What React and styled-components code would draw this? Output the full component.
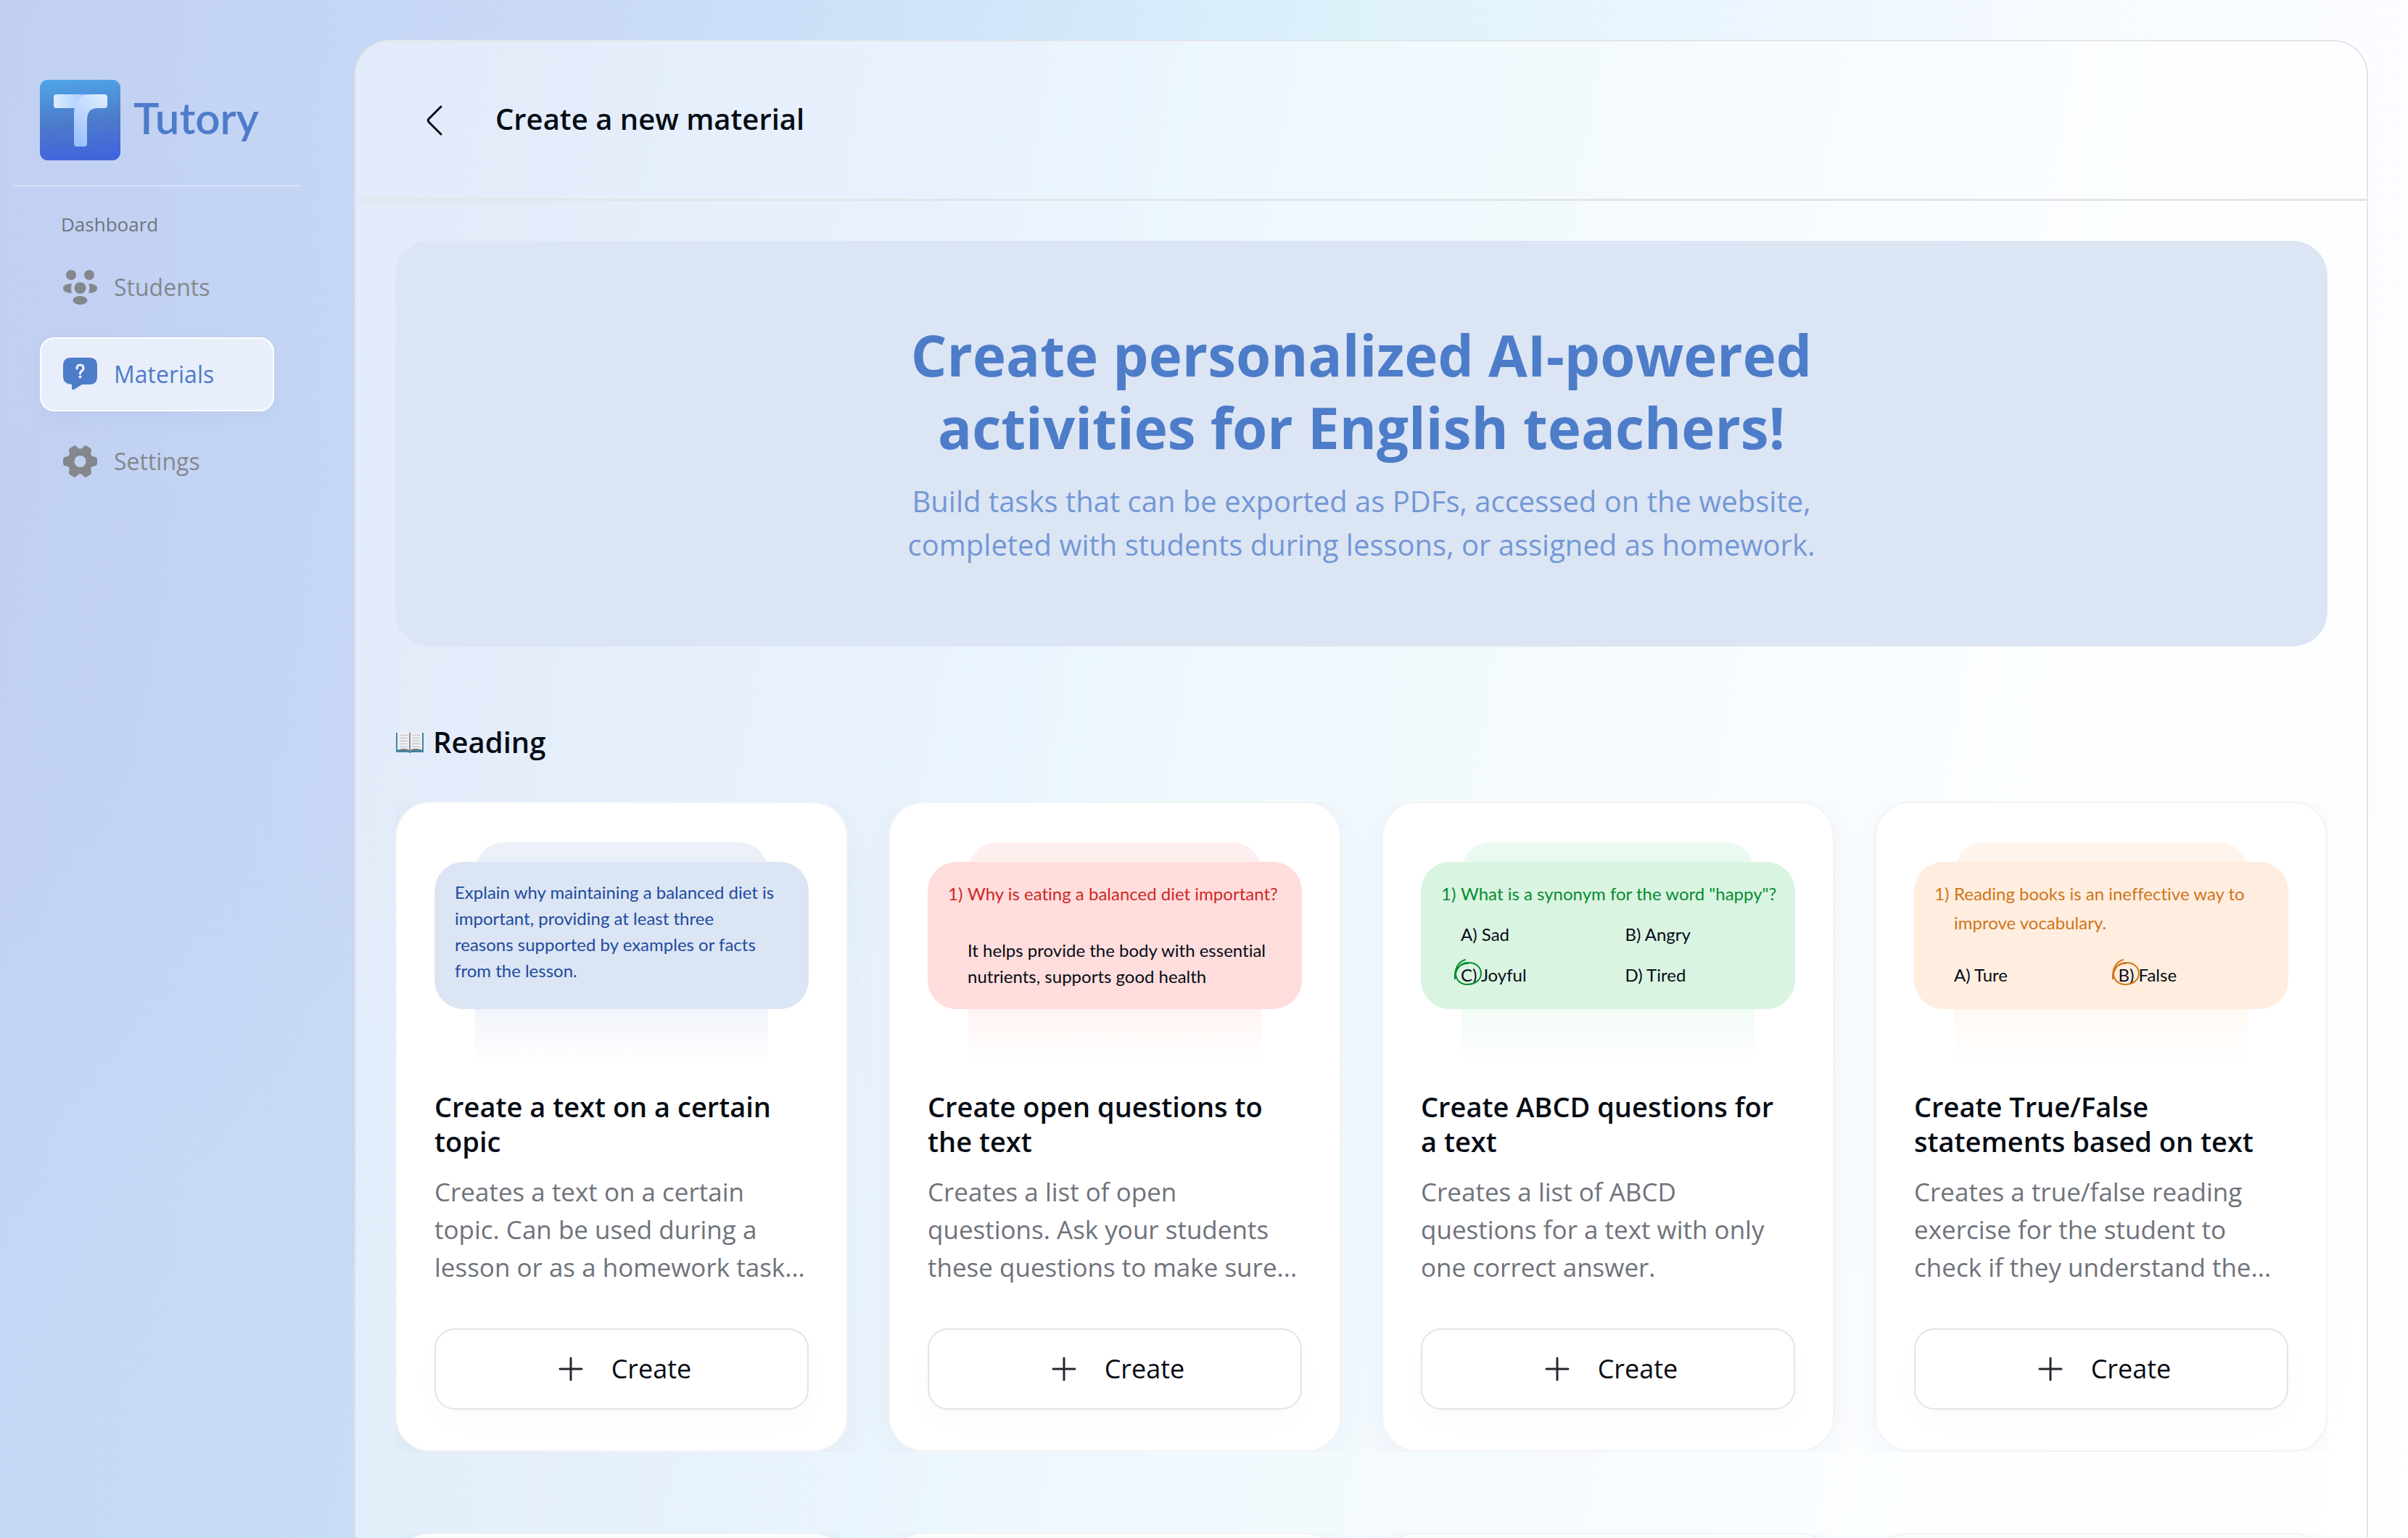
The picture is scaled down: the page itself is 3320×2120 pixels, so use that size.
import React from "react";
import styled, { createGlobalStyle } from "styled-components";

const UI = `"Open Sans", "Noto Sans", sans-serif`;
const BRAND = `"Lato", sans-serif`;
const HAND = `"Lato", sans-serif`;

const GlobalStyle = createGlobalStyle`
  *, *::before, *::after { box-sizing: border-box; }
  html, body, #root { height: 100%; }
  body { margin: 0; font-family: ${UI}; color: #060c14; overflow: hidden; font-variant-ligatures: none; }
  h1, h2, h3, p, ul { margin: 0; padding: 0; }
  button { font-family: inherit; color: inherit; cursor: pointer; }
`;

const Page = styled.div`
  display: flex;
  height: 100vh;
  overflow: hidden;
  background:
    radial-gradient(ellipse 1000px 1000px at 300px 100%, rgba(196, 224, 244, 0.4), rgba(196, 224, 244, 0)),
    radial-gradient(ellipse 600px 900px at 0 800px, rgba(192, 208, 242, 0.6), rgba(192, 208, 242, 0)),
    linear-gradient(100deg, #c2cff2 0%, #c5d6f5 12%, #c8d8f5 20%, #d1e4fa 36%, #def2fb 51%, #edf6fe 66%, #f8fcff 81%, #fdfdff 94%, #fff 100%);
`;

const Sidebar = styled.aside`
  flex: none;
  width: 489px;
  padding: 110px 74px 0 18px;
`;

const Brand = styled.a`
  display: flex;
  align-items: center;
  gap: 18px;
  padding: 0 0 34px 37px;
  border-bottom: 2px solid rgba(255, 255, 255, 0.3);
  color: #4d7cc9;
  font-family: ${BRAND};
  font-size: 60px;
  line-height: 72px;
  font-weight: 600;
  text-decoration: none;
`;

const BrandName = styled.span`
  padding-bottom: 8px;
`;

const NavLabel = styled.h2`
  margin: 32px 0 16px 66px;
  color: #6f757c;
  font-size: 26px;
  line-height: 40px;
  font-weight: 400;
`;

const NavList = styled.ul`
  display: flex;
  flex-direction: column;
  gap: 18px;
  padding: 0 37px;
  list-style: none;
`;

const NavLink = styled.a`
  display: flex;
  align-items: center;
  gap: 23px;
  height: 102px;
  padding: 0 30px;
  border: 2px solid ${(p) => (p.$active ? "#fff" : "transparent")};
  border-radius: 20px;
  background: ${(p) => (p.$active ? "rgba(255, 255, 255, 0.62)" : "transparent")};
  box-shadow: ${(p) => (p.$active ? "0 8px 24px rgba(70, 90, 150, 0.06)" : "none")};
  color: ${(p) => (p.$active ? "#4d7cc9" : "#84878b")};
  font-size: 32px;
  line-height: 44px;
  text-decoration: none;
`;

const Panel = styled.main`
  flex: 1;
  min-width: 0;
  margin: 55px 55px 0 0;
  border: 2px solid #e4e5e8;
  border-bottom: 0;
  border-radius: 48px 48px 0 0;
  background: rgba(255, 255, 255, 0.5);
  overflow: hidden;
`;

const Header = styled.header`
  display: flex;
  align-items: center;
  gap: 58px;
  height: 220px;
  padding: 0 82px;
  border-bottom: 3px solid #e4e5e8;
`;

const BackButton = styled.button`
  display: flex;
  align-items: center;
  justify-content: center;
  width: 52px;
  height: 52px;
  padding: 0;
  border: 0;
  background: none;
`;

const PageTitle = styled.h1`
  padding-bottom: 4px;
  font-size: 40px;
  line-height: 48px;
  font-weight: 600;
`;

const Content = styled.div`
  padding: 55px 54px 0;
`;

const Banner = styled.section`
  display: flex;
  flex-direction: column;
  align-items: center;
  gap: 22px;
  padding: 107px 56px 110px;
  border-radius: 48px;
  background: #dce5f4;
  text-align: center;
  white-space: nowrap;
`;

const BannerTitle = styled.h2`
  color: #4d7cc9;
  font-size: 78px;
  line-height: 100px;
  font-weight: 700;
`;

const BannerText = styled.p`
  color: #7298d6;
  font-size: 40px;
  line-height: 60px;
`;

const SectionTitle = styled.h2`
  display: flex;
  align-items: center;
  gap: 12px;
  margin: 106px 0 56px;
  font-size: 40px;
  line-height: 52px;
  font-weight: 600;
`;

const Grid = styled.div`
  display: grid;
  grid-template-columns: repeat(4, minmax(0, 1fr));
  gap: 56px;
  margin-bottom: 112px;
  overflow: hidden;
`;

const CardShell = styled.article`
  display: flex;
  flex-direction: column;
  min-height: 896px;
  padding: 54px 52px 56px;
  border: 2px solid #f2f3f5;
  border-radius: 48px;
  background: #fff;
  box-shadow: 0 8px 48px rgba(30, 60, 120, 0.05);
`;

const Preview = styled.div`
  display: grid;
  height: 332px;
  grid-template-rows: 27px 203px 1fr;
  grid-template-columns: 56px 1fr 56px;
  margin-bottom: 8px;
`;

const Sheet = styled.div`
  grid-row: 1 / 3;
  grid-column: 2;
  border-radius: 40px 40px 0 0;
  background: ${(p) => p.$color};
`;

const Fade = styled.div`
  grid-row: 3;
  grid-column: 2;
  height: 76px;
  background: linear-gradient(${(p) => p.$color}, rgba(255, 255, 255, 0));
`;

const Note = styled.div`
  grid-row: 2;
  grid-column: 1 / -1;
  display: flex;
  flex-direction: column;
  justify-content: space-between;
  padding: 24px 8px 27px 28px;
  border-radius: 40px;
  background: ${(p) => p.$color};
  font-family: ${HAND};
  font-size: 24px;
  line-height: 36px;
  white-space: nowrap;
`;

const Prompt = styled.p`
  color: ${(p) => p.$color};
`;

const Question = styled.div`
  display: grid;
  grid-template-columns: 27px 1fr;
  color: ${(p) => p.$color};
  line-height: 40px;
`;

const Answer = styled.p`
  padding-left: 27px;
`;

const Options = styled.div`
  display: grid;
  grid-template-columns: 1fr 1fr;
  padding-left: 27px;
  line-height: 40px;
`;

const Option = styled.span`
  position: relative;
`;

const Circle = styled.svg`
  position: absolute;
  left: -9px;
  top: -2px;
  width: 38px;
  height: 38px;
  overflow: visible;
`;

const CardTitle = styled.h3`
  font-size: 38px;
  line-height: 48px;
  font-weight: 600;
  white-space: nowrap;
`;

const CardText = styled.p`
  margin: 20px 0 auto;
  color: #6f737b;
  font-size: 35px;
  line-height: 52px;
  white-space: nowrap;
`;

const CreateButton = styled.button`
  display: flex;
  align-items: center;
  justify-content: center;
  gap: 36px;
  height: 112px;
  padding: 0 0 0 6px;
  border: 2px solid #e3e4e6;
  border-radius: 28px;
  background: #fff;
  box-shadow: 0 16px 40px rgba(0, 0, 0, 0.02);
  font-size: 36px;
  line-height: 48px;
`;

const Logo = () => (
  <svg width="111" height="111" viewBox="0 0 111 111" aria-hidden="true">
    <defs>
      <linearGradient id="tile" x1="0" y1="0" x2="0.1" y2="1">
        <stop offset="0" stopColor="#4fa6ea" />
        <stop offset="0.55" stopColor="#4d7cc9" />
        <stop offset="1" stopColor="#4166dc" />
      </linearGradient>
      <linearGradient id="bar" x1="0" y1="0" x2="1" y2="0">
        <stop offset="0" stopColor="#dceeff" />
        <stop offset="1" stopColor="#9dc1ff" />
      </linearGradient>
      <linearGradient id="stem" x1="0.8" y1="0" x2="0.3" y2="1">
        <stop offset="0" stopColor="#dcedff" />
        <stop offset="1" stopColor="#9dc1ff" />
      </linearGradient>
    </defs>
    <rect width="111" height="111" rx="11" fill="url(#tile)" />
    <path d="M23 20H74L48 39H23q-4 0-4-4V24q0-4 4-4Z" fill="url(#bar)" />
    <path d="M72 20H89q4 0 4 4V35q0 4-4 4H80q-15 0-15 16V88q0 4-4 4H51q-4 0-4-4V47Q47 20 72 20Z" fill="url(#stem)" />
  </svg>
);

const StudentsIcon = () => (
  <svg width="47" height="48" viewBox="0 0 47 48" fill="currentColor" aria-hidden="true">
    <circle cx="11" cy="7" r="7" />
    <circle cx="36" cy="7" r="7" />
    <circle cx="23.500" cy="25" r="8" />
    <path d="M12 19Q0 19 0 25.500T12 32Q10 25 12 19Z" />
    <path d="M35 19Q47 19 47 25.500T35 32Q38 25 35 19Z" />
    <ellipse cx="23.500" cy="42" rx="10" ry="6" />
  </svg>
);

const MaterialsIcon = () => (
  <svg width="47" height="48" viewBox="0 0 47 48" aria-hidden="true">
    <path d="M11 1H36Q47 1 47 12V27Q47 38 36 38H26L15 45Q12 46 12 43V38Q0 37 0 27V12Q0 1 11 1Z" fill="currentColor" />
    <path d="M19 16Q19 11 23.500 11T28 15.500Q28 18 25 20Q23.500 21 23.500 23" fill="none" stroke="#edf1fb" strokeWidth="3.200" strokeLinecap="round" />
    <circle cx="23.500" cy="27.500" r="2" fill="#edf1fb" />
  </svg>
);

const SettingsIcon = () => (
  <svg width="47" height="48" viewBox="0 0 47 48" aria-hidden="true">
    <path
      d="M13 3.500Q17 .5 19.500 4.500Q23.500 9 27.500 4.500Q30 .5 34 3.500L37 5.500Q40 7.500 38.500 11.500Q37 17 43 17.500Q47 18 47 21.500V26.500Q47 30 43 30.500Q37 31 38.500 36.500Q40 40.500 37 42.500L34 44.500Q30 47.500 27.500 43.500Q23.500 39 19.500 43.500Q17 47.500 13 44.500L10 42.500Q7 40.500 8.500 36.500Q10 31 4 30.500Q0 30 0 26.500V21.500Q0 18 4 17.500Q10 17 8.500 11.500Q7 7.500 10 5.500ZM23.500 16a8 8 0 1 0 0 16a8 8 0 1 0 0-16Z"
      fill="currentColor"
      fillRule="evenodd"
    />
  </svg>
);

const BackIcon = () => (
  <svg width="24" height="44" viewBox="0 0 24 44" fill="none" stroke="#060c14" strokeWidth="3" strokeLinecap="round" strokeLinejoin="round" aria-hidden="true">
    <path d="M21 3L4 20Q2.500 22 4 24L21 41" />
  </svg>
);

const BookIcon = () => (
  <svg width="40" height="32" viewBox="0 0 40 32" aria-hidden="true">
    <path d="M1 3H39V30H22Q20 32 18 30H1Z" fill="#3c86a8" />
    <path d="M3 27V3Q12 0 20 3Q28 0 37 3V27Q28 24 20 28Q12 24 3 27Z" fill="#f0eff3" />
    <path d="M3 27Q12 23 20 27Q28 23 37 27L37 28Q28 26 20 29Q12 26 3 28Z" fill="#77757d" />
    <path d="M20 3V28" stroke="#8f8d95" strokeWidth="2" />
    <path d="M6 7Q12 5 17 7M6 11Q12 9 17 11M6 15Q12 13 17 15M6 19Q12 17 17 19M6 23Q12 21 17 23M23 7Q28 5 34 7M23 11Q28 9 34 11M23 15Q28 13 34 15M23 19Q28 17 34 19M23 23Q28 21 34 23" stroke="#bab9c2" strokeWidth="1.200" fill="none" />
  </svg>
);

const PlusIcon = () => (
  <svg width="40" height="40" viewBox="0 0 40 40" stroke="#24282f" strokeWidth="3" strokeLinecap="round" aria-hidden="true">
    <path d="M20 5V35M5 20H35" />
  </svg>
);

const Marked = ({ color, children }) => (
  <Option>
    {children}
    <Circle viewBox="0 0 38 38" fill="none" stroke={color} strokeWidth="2" strokeLinecap="round" aria-hidden="true">
      <path d="M15 1C5 4 0 14 1 28C1 14 9 5 18 5C29 4 37 11 37 20C37 29 28 35 18 35C8 35 2 28 2 20C3 11 10 6 19 6" />
    </Circle>
  </Option>
);

const Lines = ({ items }) =>
  items.map((line, i) => (
    <React.Fragment key={line}>
      {i > 0 && <br />}
      {line}
    </React.Fragment>
  ));

const cards = [
  {
    title: ["Create a text on a certain", "topic"],
    text: ["Creates a text on a certain", "topic. Can be used during a", "lesson or as a homework task..."],
    tint: "#dce5f4",
    sheet: "#ecf1f9",
    fade: "#f1f4fb",
    note: (
      <Prompt $color="#1e4ba0">
        <Lines items={["Explain why maintaining a balanced diet is", "important, providing at least three", "reasons supported by examples or facts", "from the lesson."]} />
      </Prompt>
    ),
  },
  {
    title: ["Create open questions to", "the text"],
    text: ["Creates a list of open", "questions. Ask your students", "these questions to make sure..."],
    tint: "#ffdddd",
    sheet: "#ffeeee",
    fade: "#fff4f3",
    note: (
      <>
        <Question $color="#cf271f">
          <span>1)</span>
          <span>Why is eating a balanced diet important?</span>
        </Question>
        <Answer>
          <Lines items={["It helps provide the body with essential", "nutrients, supports good health"]} />
        </Answer>
      </>
    ),
  },
  {
    title: ["Create ABCD questions for", "a text"],
    text: ["Creates a list of ABCD", "questions for a text with only", "one correct answer."],
    tint: "#daf4e2",
    sheet: "#eafaf0",
    fade: "#f2fbf5",
    note: (
      <>
        <Question $color="#058c30">
          <span>1)</span>
          <span>What is a synonym for the word "happy"?</span>
        </Question>
        <Options>
          <Option>A) Sad</Option>
          <Option>B) Angry</Option>
        </Options>
        <Options>
          <Marked color="#058c30">C) Joyful</Marked>
          <Option>D) Tired</Option>
        </Options>
      </>
    ),
  },
  {
    title: ["Create True/False", "statements based on text"],
    text: ["Creates a true/false reading", "exercise for the student to", "check if they understand the..."],
    tint: "#ffeddf",
    sheet: "#fff5ec",
    fade: "#fff9f4",
    note: (
      <>
        <Question $color="#cf7519">
          <span>1)</span>
          <span>
            <Lines items={["Reading books is an ineffective way to", "improve vocabulary."]} />
          </span>
        </Question>
        <Options>
          <Option>A) Ture</Option>
          <Marked color="#cf7519">B) False</Marked>
        </Options>
      </>
    ),
  },
];

export default function App() {
  return (
    <Page>
      <GlobalStyle />
      <Sidebar>
        <Brand href="#home">
          <Logo />
          <BrandName>Tutory</BrandName>
        </Brand>
        <nav aria-label="Dashboard">
          <NavLabel>Dashboard</NavLabel>
          <NavList>
            <li>
              <NavLink href="#students"><StudentsIcon />Students</NavLink>
            </li>
            <li>
              <NavLink href="#materials" $active aria-current="page"><MaterialsIcon />Materials</NavLink>
            </li>
            <li>
              <NavLink href="#settings"><SettingsIcon />Settings</NavLink>
            </li>
          </NavList>
        </nav>
      </Sidebar>
      <Panel>
        <Header>
          <BackButton aria-label="Back"><BackIcon /></BackButton>
          <PageTitle>Create a new material</PageTitle>
        </Header>
        <Content>
          <Banner>
            <BannerTitle>
              Create personalized AI-powered<br />activities for English teachers!
            </BannerTitle>
            <BannerText>
              Build tasks that can be exported as PDFs, accessed on the website,<br />
              completed with students during lessons, or assigned as homework.
            </BannerText>
          </Banner>
          <SectionTitle><BookIcon />Reading</SectionTitle>
          <Grid>
            {cards.map((card) => (
              <CardShell key={card.title[0]}>
                <Preview>
                  <Sheet $color={card.sheet} />
                  <Fade $color={card.fade} />
                  <Note $color={card.tint}>{card.note}</Note>
                </Preview>
                <CardTitle><Lines items={card.title} /></CardTitle>
                <CardText><Lines items={card.text} /></CardText>
                <CreateButton><PlusIcon />Create</CreateButton>
              </CardShell>
            ))}
          </Grid>
          <Grid aria-hidden="true">
            {cards.map((card) => <CardShell key={card.tint} />)}
          </Grid>
        </Content>
      </Panel>
    </Page>
  );
}
